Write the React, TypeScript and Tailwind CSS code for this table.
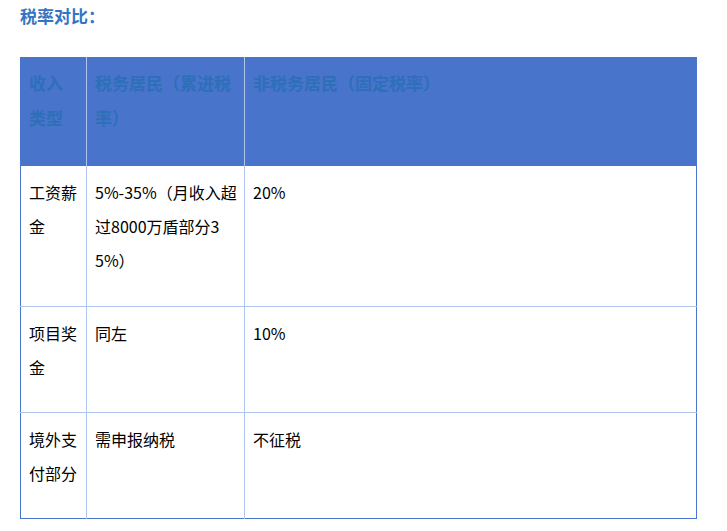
const font = { fontFamily: '"Noto Sans CJK SC", "Liberation Sans", sans-serif' };

const rows = [
  { type: ["工资薪", "金"], resident: ["5%-35%（月收入超", "过8000万盾部分3", "5%）"], nonResident: "20%", h: "h-[140px]" },
  { type: ["项目奖", "金"], resident: ["同左"], nonResident: "10%", h: "h-[106px]" },
  { type: ["境外支", "付部分"], resident: ["需申报纳税"], nonResident: "不征税", h: "h-[106px]" },
];

const Lines = ({ lines }: { lines: string[] }) => (
  <>
    {lines.map((l, i) => (
      <span key={i} className="block whitespace-nowrap">
        {l}
      </span>
    ))}
  </>
);

export default function App() {
  return (
    <div className="min-h-[531px] w-[727px] bg-white" style={font}>
      <h2 className="pl-5 pt-[4px] text-[17px] font-bold leading-[24px] text-[#3574c4]">税率对比：</h2>
      <table className="ml-5 mt-[29px] w-[677px] table-fixed border-collapse border-x border-b border-[#4874cb]">
        <colgroup>
          <col className="w-[66px]" />
          <col className="w-[158px]" />
          <col />
        </colgroup>
        <thead>
          <tr className="h-[109px] bg-[#4874cb] text-[17px] font-bold leading-[35px] text-[#2d6fb8]">
            <th className="px-2 pb-[30px] pt-[8px] text-left align-top">收入类型</th>
            <th className="border-l border-[#aec6ee] px-2 pb-[30px] pt-[8px] text-left align-top">
              税务居民（累进税率）
            </th>
            <th className="border-l border-[#aec6ee] px-2 pb-[30px] pt-[8px] text-left align-top">
              非税务居民（固定税率）
            </th>
          </tr>
        </thead>
        <tbody className="text-[16px] leading-[34px] text-black">
          {rows.map((r, i) => (
            <tr key={i} className={`${r.h} ${i > 0 ? "border-t border-[#aec6ee]" : ""}`}>
              <td className="px-2 pt-[9px] align-top">
                <Lines lines={r.type} />
              </td>
              <td className="border-l border-[#aec6ee] px-2 pt-[9px] align-top">
                <Lines lines={r.resident} />
              </td>
              <td className="border-l border-[#aec6ee] px-2 pt-[9px] align-top">{r.nonResident}</td>
            </tr>
          ))}
        </tbody>
      </table>
    </div>
  );
}
